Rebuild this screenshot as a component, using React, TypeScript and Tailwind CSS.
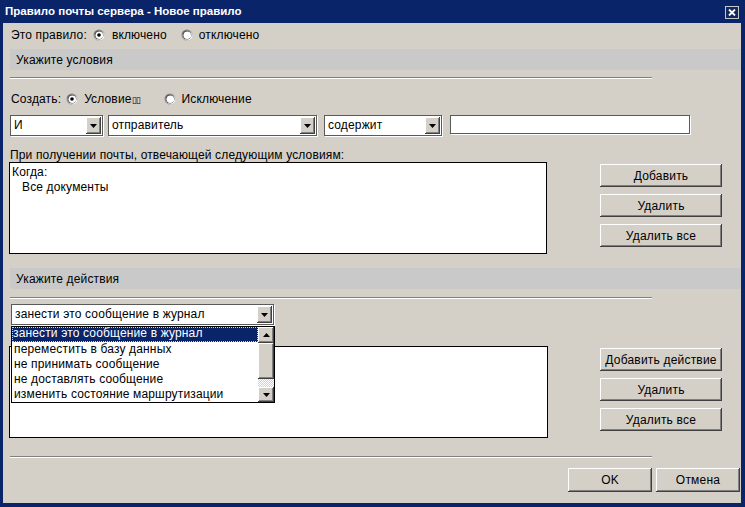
import React from 'react';

const raised =
  'shadow-[inset_-1px_-1px_0_#404040,inset_1px_1px_0_#ffffff,inset_-2px_-2px_0_#808080]';

function Radio({ checked }: { checked?: boolean }) {
  return (
    <svg width="12" height="12" viewBox="0 0 12 12" className="shrink-0">
      <circle cx="6" cy="6" r="5.5" fill="#808080" />
      <circle cx="6.5" cy="6.5" r="5" fill="#ffffff" />
      <circle cx="6" cy="6" r="4.5" fill="#404040" />
      <circle cx="6.3" cy="6.3" r="3.8" fill="#ffffff" />
      {checked && <circle cx="6" cy="6" r="1.8" fill="#000000" />}
    </svg>
  );
}

function Arrow({ up }: { up?: boolean }) {
  return (
    <svg width="7" height="4" viewBox="0 0 7 4">
      <path d={up ? 'M0 4 L3.5 0 L7 4 Z' : 'M0 0 L7 0 L3.5 4 Z'} fill="#000" />
    </svg>
  );
}

function ArrowBtn() {
  return (
    <div className={`w-[15px] bg-[#d4d0c8] flex items-center justify-center ${raised}`}>
      <Arrow />
    </div>
  );
}

function Combo({ text, className }: { text: string; className: string }) {
  return (
    <div
      className={`${className} h-[21px] bg-white flex border border-[#5a5a5a] shadow-[1px_1px_0_#ffffff] p-[1px]`}
    >
      <span className="flex-1 pl-[2px] leading-[17px] whitespace-nowrap overflow-hidden">{text}</span>
      <ArrowBtn />
    </div>
  );
}

function Btn({ label, className }: { label: string; className: string }) {
  return (
    <button
      className={`${className} bg-[#d4d0c8] flex items-center justify-center text-[12px] tracking-[0.2px] text-black ${raised}`}
    >
      {label}
    </button>
  );
}

function Band({ text }: { text: string }) {
  return <div className="h-[21px] bg-[#c9c9c9] flex items-center pl-[6px]">{text}</div>;
}

function Etched() {
  return <div className="w-[642px] h-[2px] border-t border-[#808080] bg-white" />;
}

const actions = [
  'занести это сообщение в журнал',
  'переместить в базу данных',
  'не принимать сообщение',
  'не доставлять сообщение',
  'изменить состояние маршрутизации',
];

export default function App() {
  return (
    <div className="w-[745px] h-[507px] bg-[#0a246a] pl-[3px] pr-[4px] pb-[4px] flex flex-col font-['Liberation_Sans',Arial,sans-serif] text-[12px] tracking-[0.15px] text-black">
      {/* Title bar */}
      <div className="h-[23px] flex items-center justify-between pl-[2px] pr-[2px] pt-[1px]">
        <span className="text-white font-bold text-[11.5px] tracking-normal">
          Правило почты сервера - Новое правило
        </span>
        <div className="w-[14px] h-[13px] border border-[#c8c8c8] bg-[#142a5c] flex items-center justify-center">
          <svg width="8" height="7" viewBox="0 0 8 7">
            <path d="M1 0.5 L7 6.5 M7 0.5 L1 6.5" stroke="#ffffff" strokeWidth="1.8" />
          </svg>
        </div>
      </div>

      {/* Body */}
      <div className="flex-1 bg-[#d4d0c8] flex flex-col pl-[7px]">
        <div className="h-[24px] flex items-center pl-[1px]">
          <span>Это правило:</span>
          <span className="ml-[6px]"><Radio checked /></span>
          <span className="ml-[7px]">включено</span>
          <span className="ml-[14px]"><Radio /></span>
          <span className="ml-[6px]">отключено</span>
        </div>

        <div className="mt-[2px]">
          <Band text="Укажите условия" />
        </div>
        <div className="mt-[7px]">
          <Etched />
        </div>

        <div className="mt-[9px] h-[22px] flex items-center pl-[1px]">
          <span>Создать:</span>
          <span className="ml-[5px]"><Radio checked /></span>
          <span className="ml-[6px]">
            Условие<span className="text-[9px] tracking-[-1px]">▯▯</span>
          </span>
          <span className="ml-[24px]"><Radio /></span>
          <span className="ml-[6px]">Исключение</span>
        </div>

        <div className="mt-[5px] flex items-center">
          <Combo text="И" className="w-[93px]" />
          <Combo text="отправитель" className="w-[209px] ml-[5px]" />
          <Combo text="содержит" className="w-[118px] ml-[7px]" />
          <div className="ml-[8px] w-[240px] h-[19px] bg-white border border-[#5a5a5a] shadow-[1px_1px_0_#ffffff] -mt-[2px]" />
        </div>

        <div className="mt-[13px] leading-[13px] h-[13px]">
          При получении почты, отвечающей следующим условиям:
        </div>

        <div className="flex">
          <div className="w-[538px] h-[92px] -ml-px bg-white border border-black pl-[2px] pt-[2px] leading-[15px]">
            <div>Когда:</div>
            <div className="pl-[10px]">Все документы</div>
          </div>
          <div className="ml-[53px] mt-[2px] flex flex-col gap-[7px]">
            <Btn label="Добавить" className="w-[122px] h-[23px]" />
            <Btn label="Удалить" className="w-[122px] h-[23px]" />
            <Btn label="Удалить все" className="w-[122px] h-[23px]" />
          </div>
        </div>

        <div className="mt-[14px]">
          <Band text="Укажите действия" />
        </div>
        <div className="mt-[8px]">
          <Etched />
        </div>

        <div className="mt-[5px] relative w-[263px] ml-px">
          <Combo text="занести это сообщение в журнал" className="w-[263px]" />
          {/* open dropdown */}
          <div className="absolute left-0 top-[22px] w-[264px] h-[77px] bg-white border border-black flex z-10">
            <div className="flex-1 flex flex-col">
              {actions.map((a, i) => (
                <div
                  key={a}
                  className={
                    i === 0
                      ? 'h-[15px] leading-[13px] bg-[#0a246a] text-white outline outline-1 outline-dotted outline-[#d4d0c8] -outline-offset-1 pl-[1px] whitespace-nowrap'
                      : 'h-[15px] leading-[15px] pl-[2px] whitespace-nowrap'
                  }
                >
                  {a}
                </div>
              ))}
            </div>
            <div className="w-[16px] flex flex-col bg-[repeating-conic-gradient(#ffffff_0_25%,#d4d0c8_0_50%)] bg-[length:2px_2px]">
              <div className={`h-[16px] bg-[#d4d0c8] flex items-center justify-center ${raised}`}>
                <Arrow up />
              </div>
              <div className={`h-[36px] bg-[#d4d0c8] ${raised}`} />
              <div className="flex-1" />
              <div className={`h-[15px] bg-[#d4d0c8] flex items-center justify-center ${raised}`}>
                <Arrow />
              </div>
            </div>
          </div>
        </div>

        <div className="mt-[21px] flex">
          <div className="w-[539px] h-[92px] -ml-px bg-white border border-black" />
          <div className="ml-[52px] mt-[2px] flex flex-col gap-[7px]">
            <Btn label="Добавить действие" className="w-[122px] h-[23px]" />
            <Btn label="Удалить" className="w-[122px] h-[23px]" />
            <Btn label="Удалить все" className="w-[122px] h-[23px]" />
          </div>
        </div>

        <div className="mt-[18px]">
          <Etched />
        </div>

        <div className="mt-[10px] flex justify-end gap-[4px] pr-[1px]">
          <Btn label="OK" className="w-[84px] h-[24px]" />
          <Btn label="Отмена" className="w-[84px] h-[24px]" />
        </div>
      </div>
    </div>
  );
}
